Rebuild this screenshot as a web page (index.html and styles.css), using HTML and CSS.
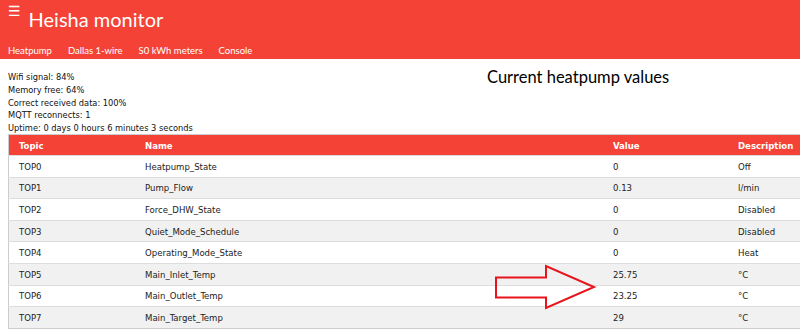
FILE: index.html
```html
<!DOCTYPE html>
<html lang="en">
<head>
    <meta charset="UTF-8">
    <meta name="viewport" content="width=device-width, initial-scale=1.0">
    <title>Heisha monitor</title>
    <link rel="stylesheet" href="styles.css">
</head>
<body>
    <div class="topbar">
        <div class="titlerow">
            <span class="burger">&#9776;</span>
            <span class="title">Heisha monitor</span>
        </div>
        <div class="nav">
            <a href="#">Heatpump</a>
            <a href="#">Dallas 1-wire</a>
            <a href="#">S0 kWh meters</a>
            <a href="#">Console</a>
        </div>
    </div>
    <div class="info">
        <div class="status">
            <div>Wifi signal: 84%</div>
            <div>Memory free: 64%</div>
            <div>Correct received data: 100%</div>
            <div>MQTT reconnects: 1</div>
            <div>Uptime: 0 days 0 hours 6 minutes 3 seconds</div>
        </div>
        <h2 class="heading">Current heatpump values</h2>
    </div>
    <div class="tablewrap">
        <table class="values">
            <thead>
                <tr><th class="c1">Topic</th><th class="c2">Name</th><th class="c3">Value</th><th class="c4">Description</th></tr>
            </thead>
            <tbody>
                <tr><td>TOP0</td><td>Heatpump_State</td><td>0</td><td>Off</td></tr>
                <tr><td>TOP1</td><td>Pump_Flow</td><td>0.13</td><td>l/min</td></tr>
                <tr><td>TOP2</td><td>Force_DHW_State</td><td>0</td><td>Disabled</td></tr>
                <tr><td>TOP3</td><td>Quiet_Mode_Schedule</td><td>0</td><td>Disabled</td></tr>
                <tr><td>TOP4</td><td>Operating_Mode_State</td><td>0</td><td>Heat</td></tr>
                <tr><td>TOP5</td><td>Main_Inlet_Temp</td><td>25.75</td><td>&deg;C</td></tr>
                <tr><td>TOP6</td><td>Main_Outlet_Temp</td><td>23.25</td><td>&deg;C</td></tr>
                <tr><td>TOP7</td><td>Main_Target_Temp</td><td>29</td><td>&deg;C</td></tr>
            </tbody>
        </table>
        <svg class="arrow" width="110" height="48" viewBox="0 0 110 48">
            <path d="M2 13.5 L52 13.5 L52 2 L100 23 L52 44 L52 33.5 L2 33.5 Z" fill="none" stroke="#e8141c" stroke-width="2"/>
        </svg>
    </div>
</body>
</html>
```

FILE: styles.css
```css
body {
    margin: 0;
    background-color: #fff;
    font-family: 'DejaVu Sans Condensed', 'DejaVu Sans', Verdana, sans-serif;
    color: #000;
    overflow: hidden;
}
.topbar {
    background-color: #f44336;
    color: #fff;
    height: 59px;
    font-family: Lato, 'Open Sans', sans-serif;
}
.titlerow {
    display: flex;
    align-items: flex-start;
    padding: 2px 0 0 8px;
    height: 38px;
}
.burger {
    font-size: 14px;
    line-height: 18px;
    margin-right: 8px;
    font-family: 'DejaVu Sans', sans-serif;
}
.title {
    font-size: 20px;
    line-height: 35px;
}
.nav {
    display: flex;
    gap: 16px;
    padding-left: 8px;
}
.nav a {
    color: #fff;
    text-decoration: none;
    font-size: 9.5px;
    line-height: 21px;
}
.info {
    display: flex;
    height: 75px;
}
.status {
    font-size: 9.2px;
    line-height: 12.8px;
    padding: 12px 0 0 8px;
    width: 479px;
    color: #111;
}
.heading {
    margin: 0;
    font-family: Lato, 'Open Sans', sans-serif;
    font-weight: normal;
    font-size: 16.5px;
    line-height: 20px;
    padding-top: 8px;
    color: #000;
}
.tablewrap {
    position: relative;
    padding-left: 8px;
}
.values {
    border-collapse: collapse;
    width: 850px;
    font-size: 9.5px;
    color: #222;
    border: 1px solid #ccc;
}
.values th {
    background-color: #f44336;
    color: #fff;
    text-align: left;
    height: 20px;
    padding: 0 10px;
}
.values td {
    height: 20.6px;
    padding: 0 10px;
    border-top: 1px solid #ddd;
}
.values tbody tr:nth-child(even) {
    background-color: #f1f1f1;
}
.c1 { width: 106px; }
.c2 { width: 448px; }
.c3 { width: 105px; }
.arrow {
    position: absolute;
    left: 494px;
    top: 130px;
}
```
